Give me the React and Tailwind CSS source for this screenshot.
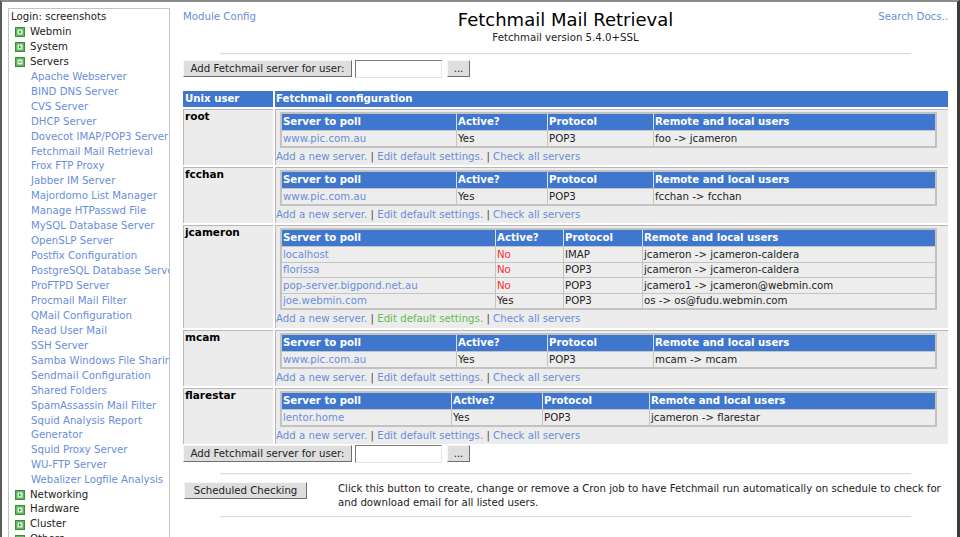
import React from "react";

const LINK = "text-[#6a8ed8]";
const BLUE = "bg-[#3f77cf]";

function Icon({ open }) {
  return (
    <svg width="10" height="10" viewBox="0 0 10 10" className="shrink-0">
      <rect x="0.5" y="0.5" width="9" height="9" fill="#5cb85c" stroke="#3d8b3d" />
      <rect x="2.5" y="2.5" width="5" height="5" fill="#e6f4dc" />
      {open ? (
        <rect x="3.5" y="4.5" width="3" height="1" fill="#3d8b3d" />
      ) : (
        <polygon points="4,3.5 6.5,5 4,6.5" fill="#3d8b3d" />
      )}
    </svg>
  );
}

function Cat({ label, open }) {
  return (
    <div className="flex items-center h-[14.95px] pl-[4px] gap-[5px] text-[#222] whitespace-nowrap">
      <Icon open={open} />
      <span>{label}</span>
    </div>
  );
}

const servers = [
  "Apache Webserver",
  "BIND DNS Server",
  "CVS Server",
  "DHCP Server",
  "Dovecot IMAP/POP3 Server",
  "Fetchmail Mail Retrieval",
  "Frox FTP Proxy",
  "Jabber IM Server",
  "Majordomo List Manager",
  "Manage HTPasswd File",
  "MySQL Database Server",
  "OpenSLP Server",
  "Postfix Configuration",
  "PostgreSQL Database Server",
  "ProFTPD Server",
  "Procmail Mail Filter",
  "QMail Configuration",
  "Read User Mail",
  "SSH Server",
  "Samba Windows File Sharing",
  "Sendmail Configuration",
  "Shared Folders",
  "SpamAssassin Mail Filter",
  "SQUIDREPORT",
  "Squid Proxy Server",
  "WU-FTP Server",
  "Webalizer Logfile Analysis",
];

function Sidebar() {
  return (
    <div className="w-[168px] shrink-0 pl-[6px] pt-[6px] h-full">
      <div className="w-[162px] h-full border border-b-0 border-[#c4c4c4] overflow-hidden pl-[2px] pt-[1px] text-[10.2px] leading-[14.95px]">
        <div className="text-[#222] whitespace-nowrap">Login: screenshots</div>
        <Cat label="Webmin" />
        <Cat label="System" />
        <Cat label="Servers" open />
        {servers.map((s) =>
          s === "SQUIDREPORT" ? (
            <div key={s} className={`pl-[20px] ${LINK} leading-[14.5px] whitespace-nowrap`}>
              Squid Analysis Report
              <br />
              Generator
            </div>
          ) : (
            <div key={s} className={`pl-[20px] ${LINK} whitespace-nowrap`}>
              {s}
            </div>
          )
        )}
        <Cat label="Networking" />
        <Cat label="Hardware" />
        <Cat label="Cluster" />
        <Cat label="Others" />
      </div>
    </div>
  );
}

function Btn({ children, w }) {
  return (
    <div
      className={`${w} h-[17px] flex items-center justify-center bg-[#dedede] border border-t-[#f6f6f6] border-l-[#f6f6f6] border-r-[#6f6f6f] border-b-[#6f6f6f] text-[#222] text-[10.2px] leading-[15px] whitespace-nowrap`}
    >
      {children}
    </div>
  );
}

function AddRow() {
  return (
    <div className="flex items-center h-[19px]">
      <Btn w="w-[169px]">Add Fetchmail server for user:</Btn>
      <div className="ml-[3px] w-[87px] h-[18px] bg-white border border-t-[#7a7a7a] border-l-[#7a7a7a] border-r-[#e4e4e4] border-b-[#e4e4e4]" />
      <div className="ml-[5px]">
        <Btn w="w-[23px]">...</Btn>
      </div>
    </div>
  );
}

function Hr() {
  return <div className="mx-[37px] h-[2px] border-t border-[#dcdcdc] bg-[#f7f7f7]" />;
}

function InnerTable({ widths, rows }) {
  const heads = ["Server to poll", "Active?", "Protocol", "Remote and local users"];
  const multi = rows.length > 1;
  return (
    <div className="ml-[4px] mt-[2px] w-[657px] border-2 border-[#c2c2c2]">
      <div className={`flex h-[16px] ${BLUE}`}>
        {heads.map((h, i) => (
          <div
            key={h}
            style={{ width: widths[i] }}
            className={`font-bold text-white leading-[16px] whitespace-nowrap ${i === 0 ? "pl-[1px]" : "pl-[1px] border-l border-[#d6e0f2]"}`}
          >
            {h}
          </div>
        ))}
      </div>
      {rows.map((r, ri) => (
        <div
          key={ri}
          className={`flex ${multi && ri % 2 === 1 ? "h-[15px]" : "h-[16px]"} bg-[#ededed] border-t border-[#c4c4c4]`}
        >
          {r.map((c, i) => (
            <div
              key={i}
              style={{ width: widths[i] }}
              className={`${multi && ri % 2 === 1 ? "leading-[14px]" : "leading-[15px]"} whitespace-nowrap ${
                i === 0 ? `pl-[1px] ${LINK}` : "pl-[1px] border-l border-[#c4c4c4]"
              } ${i === 1 && c === "No" ? "text-[#ff2e2e]" : i !== 0 ? "text-[#222]" : ""}`}
            >
              {c}
            </div>
          ))}
        </div>
      ))}
    </div>
  );
}

function Links({ green, multi }) {
  return (
    <div className={`pt-[1px] ${multi ? "h-[18px]" : "h-[17px]"} leading-[15px] whitespace-nowrap text-[#444]`}>
      <span className={LINK}>Add a new server.</span> |{" "}
      <span className={green ? "text-[#62bd4c]" : LINK}>Edit default settings.</span> |{" "}
      <span className={LINK}>Check all servers</span>
    </div>
  );
}

const W1 = [174, 91, 106, 282];
const W3 = [213, 68, 79, 293];
const W5 = [169, 91, 107, 286];

const users = [
  { name: "root", widths: W1, rows: [["www.pic.com.au", "Yes", "POP3", "foo -> jcameron"]] },
  { name: "fcchan", widths: W1, rows: [["www.pic.com.au", "Yes", "POP3", "fcchan -> fcchan"]] },
  {
    name: "jcameron",
    widths: W3,
    green: true,
    rows: [
      ["localhost", "No", "IMAP", "jcameron -> jcameron-caldera"],
      ["florissa", "No", "POP3", "jcameron -> jcameron-caldera"],
      ["pop-server.bigpond.net.au", "No", "POP3", "jcamero1 -> jcameron@webmin.com"],
      ["joe.webmin.com", "Yes", "POP3", "os -> os@fudu.webmin.com"],
    ],
  },
  { name: "mcam", widths: W1, rows: [["www.pic.com.au", "Yes", "POP3", "mcam -> mcam"]] },
  { name: "flarestar", widths: W5, rows: [["lentor.home", "Yes", "POP3", "jcameron -> flarestar"]] },
];

function Main() {
  return (
    <div className="w-[787px] shrink-0 h-full pl-[13px] pr-[9px] pt-[7px] text-[10.2px] leading-[15px] text-[#222]">
      <div className="grid grid-cols-[1fr_auto_1fr]">
        <div className={`${LINK} leading-[15px]`}>Module Config</div>
        <div className="text-center">
          <div className="text-[18px] leading-[22px] text-black">Fetchmail Mail Retrieval</div>
          <div className="leading-[13px] text-[#222]">Fetchmail version 5.4.0+SSL</div>
        </div>
        <div className={`${LINK} leading-[15px] text-right`}>Search Docs..</div>
      </div>
      <div className="mt-[9px]">
        <Hr />
      </div>
      <div className="mt-[4px]">
        <AddRow />
      </div>
      <div className="mt-[13px] grid grid-cols-[90px_673px] gap-[2px]">
        <div className={`${BLUE} h-[16px] text-white font-bold pl-[2px] leading-[16px]`}>Unix user</div>
        <div className={`${BLUE} h-[16px] text-white font-bold pl-[1px] leading-[16px]`}>Fetchmail configuration</div>
        {users.map((u) => (
          <React.Fragment key={u.name}>
            <div className="bg-[#ececec] border-t border-l border-[#b8b8b8] pl-[1px] font-bold text-[10.5px] leading-[12px] text-black">
              {u.name}
            </div>
            <div className="bg-[#ececec] border-t border-l border-[#b8b8b8]">
              <InnerTable widths={u.widths} rows={u.rows} />
              <Links green={u.green} multi={u.rows.length > 1} />
            </div>
          </React.Fragment>
        ))}
      </div>
      <AddRow />
      <div className="mt-[10px]">
        <Hr />
      </div>
      <div className="flex">
        <div className="w-[155px] shrink-0 pl-[1px] pt-[7px]">
          <Btn w="w-[123px]">Scheduled Checking</Btn>
        </div>
        <div className="pt-[7px] leading-[13.5px] whitespace-nowrap text-[#222]">
          Click this button to create, change or remove a Cron job to have Fetchmail run automatically on schedule to check for
          <br />
          and download email for all listed users.
        </div>
      </div>
      <div className="mt-[7px]">
        <Hr />
      </div>
    </div>
  );
}

export default function App() {
  return (
    <div
      className="w-[960px] h-[537px] overflow-hidden bg-white flex border-t-2 border-l-2 border-r-[3px] border-t-[#8c8c8c] border-l-[#5a5a5a] border-r-[#3a3a3a]"
      style={{ fontFamily: '"DejaVu Sans", sans-serif' }}
    >
      <Sidebar />
      <Main />
    </div>
  );
}
